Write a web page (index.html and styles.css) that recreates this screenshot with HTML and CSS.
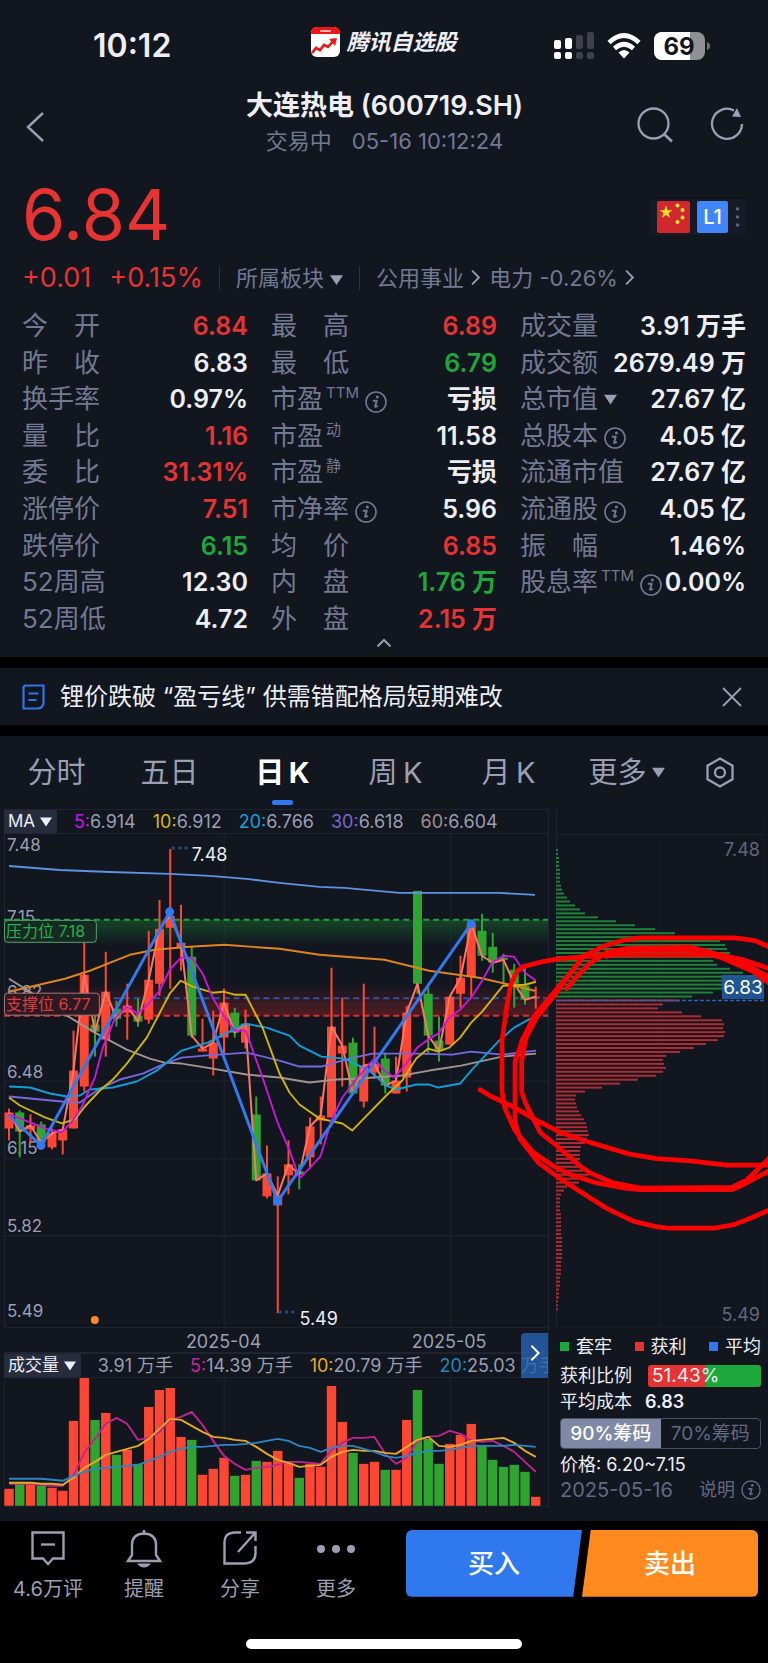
FILE: index.html
```html
<!DOCTYPE html>
<html lang="zh-CN">
<head>
<meta charset="utf-8">
<meta name="viewport" content="width=device-width, initial-scale=1">
<title>大连热电 (600719.SH)</title>
<link rel="stylesheet" href="styles.css">
</head>
<body>
<svg class="defs" aria-hidden="true">
  <symbol id="info" viewBox="0 0 22 22"><circle cx="11" cy="11" r="10" fill="none" stroke="currentColor" stroke-width="1.6"/><circle cx="12.4" cy="6" r="1.5" fill="currentColor"/><path d="M8.6 9.8h3.2l-1.7 5.4q-.3 1.4 2.2 0" fill="none" stroke="currentColor" stroke-width="1.9" stroke-linecap="round" stroke-linejoin="round"/></symbol>
  <symbol id="tri" viewBox="0 0 12 10"><path d="M0 .5h12L6 9.500z" fill="currentColor"/></symbol>
  <symbol id="next" viewBox="0 0 12 20"><path d="M2 2l8 8-8 8" fill="none" stroke="currentColor" stroke-width="2.2"/></symbol>
</svg>

<div class="status">
  <time class="clock">10:12</time>
  <div class="brand">
    <svg width="29" height="30" viewBox="0 0 29 30"><rect width="29" height="30" rx="6" fill="#fff"/><path d="M0 7V6q0-6 6-6h17q6 0 6 6v1z" fill="#f01414"/><rect x="9" y="3" width="11" height="2" fill="#ffb0b0"/><path d="M1 26l4-5 4 2 4-5 4 2 6-7" fill="none" stroke="#f01414" stroke-width="2.600"/><path d="M18 12l8-1-2 8z" fill="#f01414"/></svg>
    <span>腾讯自选股</span>
  </div>
  <div class="signals">
    <svg width="40" height="28" viewBox="0 0 40 28"><g fill="#fff"><rect y="8" width="7" height="9" rx="2"/><rect x="11" y="6" width="7" height="11" rx="2"/><rect y="20" width="7" height="7" rx="2"/><rect x="11" y="20" width="7" height="7" rx="2"/></g><g fill="#3e4149"><rect x="22" y="3" width="7" height="14" rx="2"/><rect x="33" width="7" height="17" rx="2"/><rect x="22" y="20" width="7" height="7" rx="2"/><rect x="33" y="20" width="7" height="7" rx="2"/></g></svg>
    <svg width="34" height="26" viewBox="0 0 34 26"><g fill="none" stroke="#fff" stroke-width="4.600"><path d="M2 9.500q15-14 30 0"/><path d="M7.500 15.500q9.500-8.500 19 0"/></g><path d="M11.500 19.500q5.500-5 11 0L17 25.500z" fill="#fff"/></svg>
    <svg width="56" height="28" viewBox="0 0 56 28"><defs><clipPath id="bat"><rect width="51" height="28" rx="8"/></clipPath></defs><g clip-path="url(#bat)"><rect width="51" height="28" fill="#8e9094"/><rect width="36" height="28" fill="#fff"/></g><path d="M53 10q3 1 3 4t-3 4z" fill="#6f7175"/><text x="25" y="22.500" text-anchor="middle" class="bat-text">69</text></svg>
  </div>
</div>

<header class="nav">
  <button class="icon-btn back" aria-label="返回"><svg width="20" height="32" viewBox="0 0 20 32"><path d="M18 2L3 16l15 14" fill="none" stroke="currentColor" stroke-width="2.400"/></svg></button>
  <div class="heading"><h1>大连热电 (600719.SH)</h1><p><span>交易中</span><span>05-16 10:12:24</span></p></div>
  <div class="nav-tools">
    <button class="icon-btn" aria-label="搜索"><svg width="37" height="36" viewBox="0 0 37 36"><circle cx="16.500" cy="16.500" r="15" fill="none" stroke="currentColor" stroke-width="2.300"/><path d="M27.500 27.500l7.500 7" stroke="currentColor" stroke-width="2.600" fill="none"/></svg></button>
    <button class="icon-btn" aria-label="刷新"><svg width="34" height="36" viewBox="0 0 34 36"><path d="M32 17a15 15 0 1 1-8-13.500" fill="none" stroke="currentColor" stroke-width="2.300"/><path d="M27 1l4 9-9-.5z" fill="currentColor"/></svg></button>
  </div>
</header>

<main>
<section class="quote">
  <div class="price-row">
    <strong class="price">6.84</strong>
    <div class="badges">
      <svg width="33" height="32" viewBox="0 0 33 32"><rect width="33" height="32" rx="2" fill="#d0282e"/><g fill="#fadf2c"><path d="M9 4.500l1.600 4.700h4.900l-4 2.900 1.500 4.700-4-2.900-4 2.900 1.500-4.700-4-2.900h4.900z"/><circle cx="20.500" cy="4.500" r="2"/><circle cx="25.500" cy="9" r="2"/><circle cx="25.500" cy="16.500" r="2"/><circle cx="20.500" cy="21" r="2"/></g></svg>
      <span class="level">L1</span>
      <svg width="5" height="22" viewBox="0 0 5 22" fill="#5f6580"><circle cx="2.500" cy="3" r="1.800"/><circle cx="2.500" cy="11" r="1.800"/><circle cx="2.500" cy="19" r="1.800"/></svg>
    </div>
  </div>
  <div class="change-row">
    <span class="delta">+0.01</span><span class="delta pct">+0.15%</span>
    <i class="rule"></i>
    <button class="plain">所属板块 <svg width="13" height="12"><use href="#tri"/></svg></button>
    <i class="rule"></i>
    <a href="#utility">公用事业 <svg width="11" height="17"><use href="#next"/></svg></a>
    <a href="#power">电力 -0.26% <svg width="11" height="17"><use href="#next"/></svg></a>
  </div>
  <div class="stats">
    <dl>
      <div><dt>今　开</dt><dd class="up">6.84</dd></div>
      <div><dt>昨　收</dt><dd>6.83</dd></div>
      <div><dt>换手率</dt><dd>0.97%</dd></div>
      <div><dt>量　比</dt><dd class="up">1.16</dd></div>
      <div><dt>委　比</dt><dd class="up">31.31%</dd></div>
      <div><dt>涨停价</dt><dd class="up">7.51</dd></div>
      <div><dt>跌停价</dt><dd class="down">6.15</dd></div>
      <div><dt>52周高</dt><dd>12.30</dd></div>
      <div><dt>52周低</dt><dd>4.72</dd></div>
    </dl>
    <dl>
      <div><dt>最　高</dt><dd class="up">6.89</dd></div>
      <div><dt>最　低</dt><dd class="down">6.79</dd></div>
      <div><dt>市盈<sup>TTM</sup><svg class="info"><use href="#info"/></svg></dt><dd>亏损</dd></div>
      <div><dt>市盈<sup>动</sup></dt><dd>11.58</dd></div>
      <div><dt>市盈<sup>静</sup></dt><dd>亏损</dd></div>
      <div><dt>市净率<svg class="info"><use href="#info"/></svg></dt><dd>5.96</dd></div>
      <div><dt>均　价</dt><dd class="up">6.85</dd></div>
      <div><dt>内　盘</dt><dd class="down">1.76 万</dd></div>
      <div><dt>外　盘</dt><dd class="up">2.15 万</dd></div>
    </dl>
    <dl>
      <div><dt>成交量</dt><dd>3.91 万手</dd></div>
      <div><dt>成交额</dt><dd>2679.49 万</dd></div>
      <div><dt>总市值<svg class="tri"><use href="#tri"/></svg></dt><dd>27.67 亿</dd></div>
      <div><dt>总股本<svg class="info"><use href="#info"/></svg></dt><dd>4.05 亿</dd></div>
      <div><dt>流通市值</dt><dd>27.67 亿</dd></div>
      <div><dt>流通股<svg class="info"><use href="#info"/></svg></dt><dd>4.05 亿</dd></div>
      <div><dt>振　幅</dt><dd>1.46%</dd></div>
      <div><dt>股息率<sup>TTM</sup><svg class="info"><use href="#info"/></svg></dt><dd>0.00%</dd></div>
    </dl>
  </div>
  <button class="fold" aria-label="收起"><svg width="16" height="10" viewBox="0 0 16 10"><path d="M1.500 8.500L8 2l6.500 6.500" fill="none" stroke="currentColor" stroke-width="2"/></svg></button>
</section>

<section class="news">
  <svg width="24" height="26" viewBox="0 0 24 26" fill="none" stroke="#2f74ea" stroke-width="2.200"><path d="M3 1.500h18.500v18q-1 5-6 5H1.500V3z"/><path d="M6.500 9.500h10M6.500 16h8"/></svg>
  <a href="#news">锂价跌破 “盈亏线” 供需错配格局短期难改</a>
  <button class="icon-btn" aria-label="关闭"><svg width="20" height="20" viewBox="0 0 20 20"><path d="M1 1l18 18M19 1L1 19" stroke="currentColor" stroke-width="1.800"/></svg></button>
</section>

<section class="kline">
  <nav class="tabs">
    <button>分时</button><button>五日</button><button class="active">日&thinsp;K</button><button>周&thinsp;K</button><button>月&thinsp;K</button>
    <button class="more">更多<svg width="13" height="11"><use href="#tri"/></svg></button>
    <button aria-label="设置"><svg width="30" height="31" viewBox="0 0 30 31" fill="none" stroke="currentColor" stroke-width="2.300"><path d="M15 1.500l12.500 7.200v13.600L15 29.500 2.500 22.300V8.700z"/><circle cx="15" cy="15.500" r="5"/></svg></button>
  </nav>
  <div class="charts">
    <div class="left">
      <div class="legend">
        <button class="chip">MA <svg width="12" height="10"><use href="#tri"/></svg></button>
        <span><b class="m5">5:</b>6.914</span><span><b class="m10">10:</b>6.912</span><span><b class="m20">20:</b>6.766</span><span><b class="m30">30:</b>6.618</span><span><b class="m60">60:</b>6.604</span>
      </div>
      <svg id="candles" class="plot" viewBox="4 833 545 520" role="img" aria-label="日K线"></svg>
      <div class="legend">
        <button class="chip">成交量 <svg width="12" height="10"><use href="#tri"/></svg></button>
        <span>3.91 万手</span><span><b class="v5">5:</b>14.39 万手</span><span><b class="v10">10:</b>20.79 万手</span><span><b class="v20">20:</b>25.03 万手</span>
      </div>
      <button class="expand" aria-label="展开"><svg width="12" height="18"><use href="#next"/></svg></button>
      <svg id="volume" class="plot" viewBox="4 1378 545 129" role="img" aria-label="成交量"></svg>
    </div>
    <div class="right">
      <svg id="chips" class="plot" viewBox="556 808 208 519" role="img" aria-label="筹码分布"></svg>
      <div class="chip-info">
        <ul><li class="k-down">套牢</li><li class="k-up">获利</li><li class="k-avg">平均</li></ul>
        <p class="ratio">获利比例 <span class="bar">51.43%</span></p>
        <p class="cost">平均成本 <b>6.83</b></p>
        <div class="segment"><button class="on">90%筹码</button><button>70%筹码</button></div>
        <p class="range">价格: 6.20~7.15</p>
        <p class="note"><span>2025-05-16</span><a href="#help">说明 <svg width="20" height="20"><use href="#info"/></svg></a></p>
      </div>
    </div>
    <svg class="scribble" viewBox="0 808 768 700" aria-hidden="true">
      <g transform="translate(490 800) scale(.3333 .338)" fill="none" stroke="#f00" stroke-width="14" stroke-linejoin="round" stroke-linecap="round">
        <path d="M850 437L795 413 735 405H450L400 412 340 430 280 460 240 510 180 580 130 640 95 715 75 770V950L90 1000 145 1070 200 1110 270 1155 350 1205 430 1243 500 1260 540 1264H670L730 1254 785 1233 850 1205"/>
        <path d="M850 500L760 470 690 455H350L200 468 160 475 100 490 80 505 62 545 50 610 36 710V860L45 910 75 975 130 1040 190 1080 240 1105 320 1130 400 1145 450 1150H725L750 1140 850 1088"/>
        <path d="M230 555L260 520 300 480 350 448 420 435 600 432 700 458 770 485 850 528"/>
        <path d="M270 475L225 530 190 580 140 640 108 700 95 770V860L105 890 150 980 200 1020 270 1080 300 1100 370 1130 450 1145 725 1143 770 1122 850 1045"/>
        <path d="M850 548L790 505 690 462 600 440 420 440 350 460"/>
        <path d="M-30 854L0 872 70 905 140 945 210 980 300 1010 420 1045 500 1058 600 1065 710 1077H850"/>
        <path d="M170 600L125 655 95 710"/>
      </g>
    </svg>
  </div>
</section>
</main>

<footer class="dock">
  <div class="actions">
    <button><svg width="36" height="36" viewBox="0 0 36 36" fill="none" stroke="currentColor" stroke-width="2.400"><path d="M2.500 2.500h31v26h-10.500L18 34l-5-5.500H2.500z"/><path d="M11 14.500h14"/></svg>4.6万评</button>
    <button><svg width="36" height="38" viewBox="0 0 36 38"><path d="M2 31l4-6V15q0-11 12-11.500Q30 4 30 15v10l4 6zM18 4V0" fill="none" stroke="currentColor" stroke-width="2.400"/><path d="M11 33.500h14q-3 4-7 4t-7-4z" fill="currentColor"/></svg>提醒</button>
    <button><svg width="36" height="36" viewBox="0 0 36 36" fill="none" stroke="currentColor" stroke-width="2.400"><path d="M19 2.500H12Q2.500 3 2.500 12v21.500H23Q33.500 33 33.500 23V16"/><path d="M24 2.500h9.500V11M33 3L16 22"/></svg>分享</button>
    <button><svg width="40" height="36" viewBox="0 0 40 36" fill="currentColor"><circle cx="5" cy="19" r="4"/><circle cx="20" cy="19" r="4"/><circle cx="35" cy="19" r="4"/></svg>更多</button>
  </div>
  <div class="trade"><button class="buy">买入</button><button class="sell">卖出</button></div>
</footer>
<div class="home"><i></i></div>
<script src="chart.js"></script>
</body>
</html>
```
FILE: styles.css
```css
* { box-sizing: border-box; margin: 0; padding: 0; }
:root { --bg: #12161f; --muted: #727993; --soft: #9a9fb4; --text: #eceef4; --up: #e83333; --down: #1ca83c; --blue: #2f78ee; }
body { background: #000; color: var(--text); font-family: Inter, "Noto Sans CJK SC", sans-serif; line-height: 1.2; }
button { border: 0; background: none; color: inherit; font: inherit; cursor: pointer; }
a { color: inherit; text-decoration: none; }
ul { list-style: none; }
svg { flex: none; }
.defs { position: absolute; width: 0; height: 0; }

.status { display: grid; grid-template-columns: 1fr auto 1fr; align-items: center; height: 80px; padding: 12px 58px 0; background: var(--bg); }
.clock { padding-left: 35px; font-size: 32px; font-weight: 600; }
.brand { display: flex; align-items: center; gap: 6px; padding-bottom: 8px; font-size: 22px; line-height: 30px; font-weight: 700; font-style: italic; }
.signals { display: flex; justify-content: flex-end; align-items: center; gap: 13px; }
.bat-text { font-size: 24px; font-weight: 700; fill: #14161c; }

.nav { display: grid; grid-template-columns: 1fr auto 1fr; align-items: center; height: 84px; padding: 2px 24px 0 25px; background: var(--bg); }
.icon-btn { display: flex; color: var(--soft); }
.back { padding-top: 8px; }
.heading { text-align: center; }
h1 { font-size: 27px; line-height: 36px; font-weight: 600; }
.heading p { display: flex; justify-content: center; gap: 20px; font-size: 22px; line-height: 34px; color: var(--muted); }
.nav-tools { display: flex; justify-content: flex-end; gap: 36px; padding-top: 3px; }

.quote { background: var(--bg); }
.price-row { display: flex; justify-content: space-between; align-items: center; height: 100px; padding: 2px 22px 0; }
.price { font-size: 70px; line-height: 80px; font-weight: 400; color: var(--up); }
.badges { display: flex; align-items: center; gap: 7px; padding: 2px 6px; background: #161a27; margin-top: 3px; }
.level { width: 31px; font-size: 20px; line-height: 32px; font-weight: 500; text-align: center; color: #fff; background: #4086f8; border-radius: 2px; }
.change-row { display: flex; align-items: center; height: 28px; padding: 0 22px; font-size: 22px; line-height: 28px; color: var(--muted); white-space: nowrap; }
.delta { font-size: 27px; color: var(--up); }
.pct { margin-left: 18px; }
.rule { width: 1px; height: 24px; margin: 0 16px; background: #2c3144; }
.change-row a { margin-right: 8px; }
.change-row svg { color: var(--soft); }

.stats { display: grid; grid-template-columns: repeat(3, 1fr); gap: 23px; margin-top: 16px; padding: 0 22px; }
.stats dl { display: grid; grid-template-rows: repeat(9, 1fr); height: 329px; }
.stats dl > div { display: flex; justify-content: space-between; align-items: center; white-space: nowrap; line-height: 36px; }
dt { display: flex; align-items: center; font-size: 26px; color: var(--muted); }
dd { font-size: 25px; font-weight: 600; }
sup { align-self: flex-start; margin-left: 3px; font-size: 15px; line-height: 24px; }
.info { width: 22px; height: 22px; margin: 5px 0 0 6px; }
.tri { width: 13px; height: 11px; margin-left: 6px; color: var(--soft); }
.up { color: var(--up); }
.down { color: var(--down); }
.fold { display: flex; justify-content: center; width: 100%; height: 20px; padding-top: 1px; color: var(--soft); }

.news { display: flex; align-items: center; gap: 14px; height: 57px; margin: 11px 0; padding: 0 26px 0 22px; background: var(--bg); font-size: 24px; line-height: 36px; }
.news .icon-btn { margin-left: auto; }

.kline { background: var(--bg); }
.tabs { display: grid; grid-template-columns: repeat(6, 113fr) 84fr; height: 73px; padding-right: 6px; }
.tabs button { position: relative; display: flex; justify-content: center; align-items: center; font-size: 29px; line-height: 40px; color: var(--soft); }
.tabs .more { gap: 5px; padding-left: 10px; }
.tabs .active { color: #fff; font-weight: 700; }
.tabs .active::after { content: ""; position: absolute; bottom: 4px; left: 46px; width: 21px; height: 5px; border-radius: 2px; background: var(--blue); }

.charts { position: relative; display: grid; grid-template-columns: 545fr 208fr; gap: 7px; padding: 0 4px 14px; }
.left, .right { min-width: 0; }
.left { position: relative; border-right: 1px solid #1f2432; }
.plot { display: block; width: 100%; height: auto; }
.plot text { font-size: 17px; fill: var(--soft); }
.legend { display: flex; align-items: center; gap: 17px; height: 25px; overflow: hidden; white-space: nowrap; font-size: 18px; line-height: 25px; color: var(--soft); border-top: 1px solid #1f2432; border-bottom: 1px solid #1f2432; }
.legend b { font-weight: 400; }
.chip { height: 25px; padding: 0 5px 0 4px; background: #262c3e; color: var(--text); font-size: 17px; line-height: 25px; }
.m5 { color: #cf12e6; } .m10 { color: #d8b90e; } .m20 { color: #139fdc; } .m30 { color: #7668d6; } .m60 { color: #a3918a; }
.v5 { color: #c8279a; } .v10 { color: #e5aa25; } .v20 { color: #2787bd; }
.expand { position: absolute; right: 0; bottom: 129px; width: 27px; height: 45px; border-radius: 4px 0 0 0; background: rgba(37, 99, 180, .8); color: #fff; }

.chip-info { display: grid; gap: 2px; padding: 5px 3px 0 4px; font-size: 18px; line-height: 26px; white-space: nowrap; }
.chip-info ul { display: flex; justify-content: space-between; line-height: 28px; }
.chip-info li::before { content: ""; display: inline-block; width: 9px; height: 9px; margin: 0 7px 2px 0; background: var(--k); }
.k-down { --k: var(--down); } .k-up { --k: var(--up); } .k-avg { --k: var(--blue); }
.ratio { display: flex; justify-content: space-between; align-items: center; }
.bar { width: 113px; height: 22px; padding-left: 4px; border-radius: 3px; line-height: 22px; font-size: 19px; background: linear-gradient(90deg, var(--up) 51.43%, var(--down) 0); }
.cost { line-height: 22px; }
.cost b { margin-left: 8px; font-weight: 600; }
.segment { display: grid; grid-template-columns: 1fr 1fr; height: 31px; margin-top: 3px; border: 1px solid #4a5068; border-radius: 4px; overflow: hidden; }
.segment button { font-size: 19px; line-height: 30px; color: #626983; }
.segment .on { background: #7f89a6; color: #fff; font-weight: 500; }
.range { margin-top: 2px; line-height: 24px; }
.note { display: flex; justify-content: space-between; line-height: 22px; color: #626983; font-size: 20px; }
.note a { display: flex; align-items: center; gap: 6px; font-size: 18px; }
.scribble { position: absolute; top: 0; left: 0; width: 100%; pointer-events: none; overflow: hidden; }

.plot .big { font-size: 18px; }
.plot .peak { font-size: 18px; fill: var(--text); }
.plot .side { font-size: 18px; fill: #62677c; }
.plot .cur { font-size: 19px; fill: #fff; }
.plot .tag-down { font-size: 16px; fill: #28b04a; }
.plot .tag-up { font-size: 16px; fill: #e03c3c; }
.grid { stroke: #1f2432; stroke-width: 1; }
.faint { opacity: .4; }

.dock { display: grid; grid-template-columns: 384fr 352fr; gap: 22px; padding: 9px 10px 0 0; }
.actions { display: grid; grid-template-columns: repeat(4, 1fr); }
.actions button { display: flex; flex-direction: column; align-items: center; justify-content: space-between; height: 74px; color: var(--soft); font-size: 20px; line-height: 30px; }
.trade { display: grid; grid-template-columns: 1fr 1fr; height: 67px; }
.trade button { font-size: 26px; font-weight: 500; color: #fff; }
.buy { background: var(--blue); border-radius: 6px 0 0 6px; clip-path: polygon(0 0, 100% 0, 95% 100%, 0 100%); }
.sell { background: #ff8a1f; border-radius: 0 6px 6px 0; clip-path: polygon(5% 0, 100% 0, 100% 100%, 0 100%); }
.home { display: flex; justify-content: center; padding: 35px 0 14px; }
.home i { width: 36%; height: 10px; border-radius: 5px; background: #fff; }
```
FILE: chart.js
```js
const RED = '#ff4633', GREEN = '#2fa52f', STEP = 10.77, X0 = 9;
const cx = i => X0 + i * STEP;
const line = (pts, color, w = 1.9) => `<polyline points="${pts}" fill="none" stroke="${color}" stroke-width="${w}" stroke-linejoin="round"/>`;
const text = (x, y, s, cls = '', anchor = 'start') => `<text x="${x}" y="${y}" class="${cls}" text-anchor="${anchor}">${s}</text>`;
const rule = (x1, y1, x2, y2, cls = '') => `<line class="grid ${cls}" x1="${x1}" y1="${y1}" x2="${x2}" y2="${y2}"/>`;

// body top, body bottom, wick top, wick bottom, rising
const candles = [
[1112,1128,1108,1140,1],[1112,1131,1110,1157,0],[1125,1129,1114,1142,1],[1124,1142,1121,1145,0],[1133,1147,1128,1149,1],
[1129,1140,1129,1154,1],[1070,1128,1030,1128,1],[974,1086,942,1091,1],[1024,1031,1015,1056,0],[991,1039,951,1056,1],
[1008,1018,1000,1026,0],[1005,1012,983,1039,1],[1015,1021,998,1026,0],[979,1019,930,1023,1],[928,983,899,995,1],
[915,927,848,988,1],[942,947,904,970,1],[956,1035,946,1037,0],[1048,1051,1018,1051,1],[1042,1058,1010,1075,1],
[1002,1037,988,1055,1],[1012,1032,1007,1037,0],[1023,1042,1009,1048,1],[1114,1180,1096,1180,0],[1173,1196,1145,1198,1],
[1195,1205,1176,1313,1],[1164,1175,1140,1194,1],[1171,1174,1164,1189,0],[1126,1157,1117,1167,1],[1115,1120,1096,1144,1],
[1026,1117,967,1117,1],[1045,1053,997,1086,1],[1042,1093,1037,1093,0],[1065,1101,983,1107,1],[1063,1072,1026,1078,1],
[1058,1085,1052,1093,0],[1080,1093,1056,1093,1],[1012,1077,1005,1091,1],[890,983,890,993,0],[993,1035,987,1053,0],
[1040,1050,1016,1061,0],[996,1044,996,1044,1],[977,993,955,1007,1],[923,976,923,997,1],[930,955,913,960,0],
[946,962,932,972,0],[957,959,953,983,0],[969,983,963,1007,0],[985,999,967,1004,0],[996,997,986,1008,1]];

let s = `<defs>
<linearGradient id="gd" x1="0" y1="0" x2="0" y2="1"><stop offset="0" stop-color="#16552a" stop-opacity=".75"/><stop offset="1" stop-color="#16552a" stop-opacity="0"/></linearGradient>
<linearGradient id="gu" x1="0" y1="1" x2="0" y2="0"><stop offset="0" stop-color="#7a2026" stop-opacity=".6"/><stop offset="1" stop-color="#7a2026" stop-opacity="0"/></linearGradient></defs>`;
[925, 1003, 1080, 1158, 1235, 1327, 1352].forEach(y => s += rule(4, y + .5, 549, y + .5));
[4.5, 224.5, 451.5].forEach(x => s += rule(x, 833, x, 1327));
s += '<rect x="4" y="919" width="545" height="26" fill="url(#gd)"/><rect x="4" y="983" width="545" height="32" fill="url(#gu)"/>';
[[7.48, 850], [7.15, 922], [6.82, 997], [6.48, 1077], [6.15, 1154], [5.82, 1232], [5.49, 1317]].forEach(([v, y]) => s += text(7, y, v.toFixed(2)));
const dash = (y, c) => `<line x1="4" x2="549" y1="${y}" y2="${y}" stroke="${c}" stroke-width="2" stroke-dasharray="6 4"/>`;
s += dash(919, '#22a040') + dash(997.5, '#2c559f') + dash(1015, '#d93036');
candles.forEach(([t, b, h, l, up], i) => {
  const c = up ? RED : GREEN;
  s += `<rect x="${cx(i) - 1}" y="${h}" width="2" height="${l - h}" fill="${c}"/><rect x="${cx(i) - 4.500}" y="${t}" width="9" height="${b - t}" fill="${c}"/>`;
});
s += line(candles.map((k, i) => `${cx(i)},${k[4] ? k[0] : k[1]}`).join(' '), '#fb7765', 2);
s += line('9,865 60,869 110,871 170,873 210,875 247,878 280,882 320,886 345,887 400,892 440,892 500,892 536,894', '#5f92e6');
s += line('9,991 65,978 90,970 130,954 155,949 190,946 225,944 280,948 320,954 385,959 430,970 480,977 515,985 536,990', '#e0841f');
s += line('9,978 30,991 67,1015 95,1032 127,1049 150,1058 165,1062 182,1063 207,1067 247,1074 280,1077 310,1082 337,1079 360,1078 403,1075 430,1070 462,1065 503,1056 537,1053', '#a3948f');
s += line('9,1096 62,1101 80,1102 100,1088 120,1079 143,1073 165,1063 182,1057 205,1055 247,1052 280,1060 300,1066 322,1066 350,1058 373,1053 417,1053 453,1054 472,1051 503,1054 537,1050', '#7668e0');
s += line('9,1086 30,1087 50,1093 67,1096 80,1095 90,1089 113,1087 137,1081 157,1070 182,1050 208,1042 246,1023 267,1027 290,1035 300,1045 322,1056 345,1058 370,1070 387,1085 397,1089 417,1084 430,1084 439,1087 461,1083 472,1070 500,1040 515,1027 537,1015', '#109fdd');
s += line('9,1097 20,1105 45,1117 62,1123 75,1119 85,1106 100,1090 113,1079 127,1063 147,1037 170,993 181,980 193,986 213,992 224,991 235,994 246,994 263,1027 280,1073 290,1092 300,1104 320,1118 343,1123 353,1130 387,1095 403,1080 417,1058 429,1048 439,1051 450,1047 461,1037 472,1022 483,1011 504,985 526,984 537,981', '#d0b40a');
s += line('9,1114 30,1122 45,1128 62,1132 73,1120 82,1106 95,1077 103,1047 115,1018 127,1006 138,1013 149,1003 160,990 170,969 181,957 192,957 203,973 213,997 224,1015 235,1030 246,1030 263,1077 278,1122 290,1150 300,1178 310,1168 321,1156 332,1120 343,1097 358,1077 375,1058 385,1070 395,1077 407,1063 418,1047 429,1039 439,1033 450,1017 461,1009 472,997 483,980 493,962 504,955 515,956 526,972 537,980', '#c916dd');
s += line('9,1115 41,1145 170,911 278,1201 472,923', '#3279ef', 3);
[[41,1145],[170,911],[278,1201],[472,923]].forEach(([x, y]) => s += `<circle cx="${x}" cy="${y}" r="4.500" fill="#3279ef"/>`);
s += '<circle cx="95" cy="1320" r="4" fill="#ff8a1f"/>';
[[172, 847], [279, 1312]].forEach(([x, y]) => s += `<line x1="${x}" y1="${y}" x2="${x + 16}" y2="${y}" stroke="#284a7c" stroke-width="3" stroke-dasharray="3 3.500"/>`);
s += text(192, 860, '7.48', 'peak') + text(300, 1325, '5.49', 'peak');
s += `<rect x="4.500" y="919.500" width="92" height="22" rx="3" fill="#142a22" stroke="#5ba070"/>${text(6, 936, '压力位 7.18', 'tag-down')}`;
s += `<rect x="4.500" y="992.500" width="95" height="22" rx="3" fill="#2b1a24" stroke="#a87878"/>${text(6, 1009, '支撑位 6.77', 'tag-up')}`;
s += text(224, 1348, '2025-04', 'big', 'middle') + text(450, 1348, '2025-05', 'big', 'middle');
document.getElementById('candles').innerHTML = s;

// heights of the volume bars, in plot units
const vol = [17,22,22,20,18,15,85,128,86,93,51,56,42,99,116,118,69,66,31,37,48,30,31,45,44,55,43,28,42,39,120,84,53,42,44,36,36,86,116,67,42,62,71,82,61,46,39,41,34,9];
const v5 = [22,22,22,21,20,20,31,53,67,82,88,82,66,68,74,86,89,94,81,65,50,42,36,38,39,41,44,44,43,42,56,63,68,68,69,52,42,48,65,69,70,75,72,65,64,65,60,54,44,34];
const v10 = [23,23,23,22,22,21,28,38,44,51,54,57,60,67,77,87,86,80,74,69,68,66,65,59,52,46,43,39,40,41,49,54,56,55,55,53,52,59,66,69,60,59,61,65,66,67,68,63,55,49];
const v20 = [27,27,27,27,26,25,30,34,37,38,39,40,41,45,49,54,57,59,59,60,61,61,62,63,65,67,65,60,58,54,58,60,60,57,54,50,48,50,53,55,55,56,58,60,60,60,60,61,60,59];
let v = rule(4, 1506.5, 549, 1506.5) + rule(4.5, 1378, 4.5, 1506) + rule(224.5, 1378, 224.5, 1506) + rule(451.5, 1378, 451.5, 1506);
vol.forEach((h, i) => v += `<rect x="${cx(i) - 4.700}" y="${1506 - h}" width="9.400" height="${h}" fill="${candles[i][4] ? RED : GREEN}"/>`);
[[v5, '#c02490'], [v10, '#e5aa25'], [v20, '#2a86c4']].forEach(([a, c]) => v += line(a.map((h, i) => `${cx(i)},${1506 - h}`).join(' '), c));
document.getElementById('volume').innerHTML = v;

// chip distribution, one width for each price level from high to low
const dist = [2,2,3,3,3,4,4,4,4,5,6,8,11,14,19,24,29,42,60,79,99,119,147,164,169,171,174,167,157,161,174,187,197,201,194,181,157,136,123,
107,102,126,145,166,168,167,169,168,162,150,138,124,110,107,108,110,107,100,82,64,46,29,20,19,20,21,23,25,28,30,31,32,33,31,29,25,24,24,24,24,25,27,33,31,23,11,8,5,4,4,4,4,5,5,5,5,5,5,6,6,6,6,6,6,5,5,5,5,4,4,4,3,3,3,2,2,2];
let d = rule(556.5, 808, 556.5, 1327) + rule(763.5, 808, 763.5, 1327, 'faint') + rule(660.5, 833, 660.5, 1327, 'faint') + rule(556, 833.5, 764, 833.5) + rule(556, 1326.5, 764, 1326.5, 'faint');
dist.forEach((w, i) => d += `<rect x="556" y="${848 + i * 3.96}" width="${w}" height="2" fill="${i < 38 ? '#1d8237' : '#b02c33'}"/>`);
d += '<line x1="556" x2="764" y1="999.500" y2="999.500" stroke="#2c64b4" stroke-width="1.500" stroke-dasharray="4 2"/><rect x="722" y="974" width="42" height="24" fill="#225a9c" fill-opacity=".9"/>';
d += text(743, 993, '6.83', 'cur', 'middle') + text(760, 855, '7.48', 'side', 'end') + text(760, 1320, '5.49', 'side', 'end');
document.getElementById('chips').innerHTML = d;
```
